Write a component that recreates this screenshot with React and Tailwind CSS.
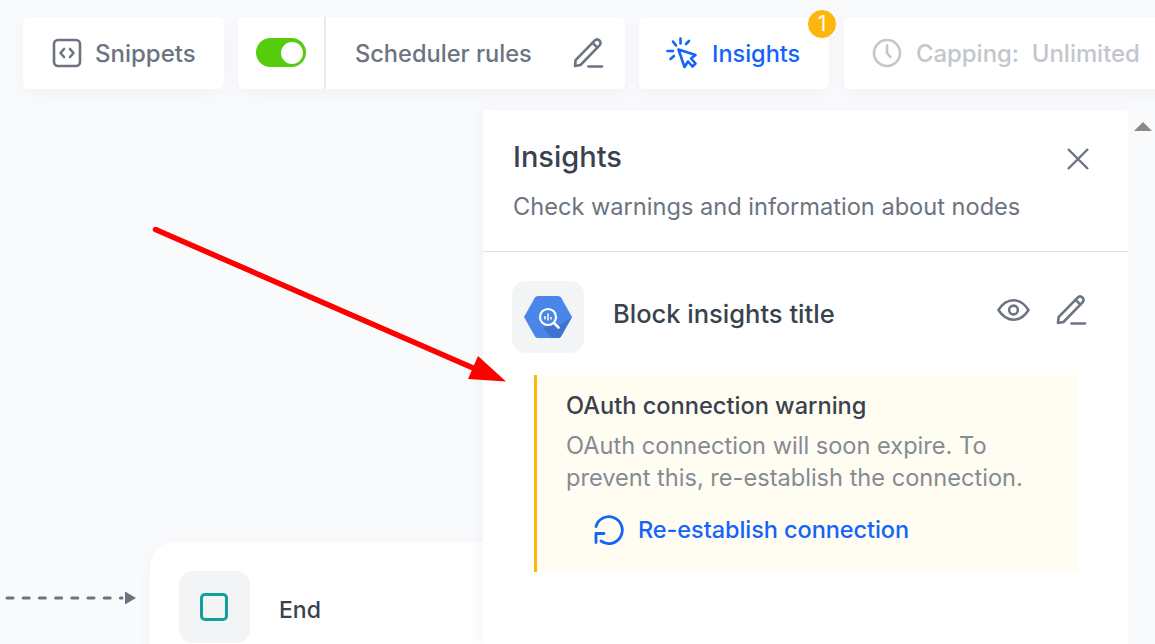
import React from "react";

const font = { fontFamily: "Inter, 'Noto Sans', sans-serif" };

const PencilIcon = ({ className }) => (
  <svg viewBox="0 0 32 32" fill="none" stroke="currentColor" strokeWidth="2.6" strokeLinejoin="round" strokeLinecap="round" className={className}>
    <path d="M3 29 L3.6 23.2 L22.6 3.6 C24 2.2 26 2.2 27.4 3.5 C28.9 4.9 28.9 7 27.5 8.4 L8.5 28 Z" />
    <path d="M20.6 5.8 L25.4 10.6" />
    <path d="M16.5 29.5 H30" />
  </svg>
);

const CursorIcon = () => (
  <svg viewBox="0 0 32 32" fill="none" stroke="currentColor" strokeWidth="2.6" strokeLinecap="round" strokeLinejoin="round" className="w-[32px] h-[32px]">
    <path d="M12.5 12.5 L29.5 18 L25 21.5 L29.5 26.5 L26.5 29.5 L22 24.5 L18.5 30 Z" />
    <path d="M14.5 1.5 V6.5" />
    <path d="M7 4.5 L10 8.5" />
    <path d="M23 4 L20 7" />
    <path d="M1.5 14 H7" />
    <path d="M4.5 22 L8 19" />
  </svg>
);

const BigQueryLogo = () => (
  <svg viewBox="0 0 50 44" className="w-[50px] h-[44px]">
    <path d="M1 22 L12 2.5 Q13 1 15 1 H35 Q37 1 38 2.5 L49 22 L38 41.5 Q37 43 35 43 H15 Q13 43 12 41.5 Z" fill="#4a86e8" />
    <path d="M32 28 L37 30 L49 22 L38 41.5 Q37 43 35 43 H29 L20 33 Z" fill="#3f73cf" />
    <circle cx="25" cy="22" r="8" fill="none" stroke="#fff" strokeWidth="2.2" />
    <path d="M31 28 L35.5 32.5" stroke="#fff" strokeWidth="2.6" strokeLinecap="round" />
    <path d="M22 21 V24.5 M25 18.5 V25.5 M28 22 V24.5" stroke="#fff" strokeWidth="1.5" />
  </svg>
);

const Card = ({ className, children }) => (
  <div className={`h-[72px] bg-white rounded-md flex items-center shrink-0 shadow-[0_4px_14px_rgba(80,90,110,0.05)] ${className}`}>
    {children}
  </div>
);

export default function App() {
  return (
    <div className="relative w-[1155px] h-[644px] overflow-hidden bg-[#f9fafc]" style={font}>
      {/* Top toolbar */}
      <div className="flex pt-[17px] pl-[23px] h-[110px]">
        <Card className="w-[201px] pl-[29px] gap-[13px] text-[#6b7480]">
          <svg viewBox="0 0 30 30" fill="none" stroke="currentColor" strokeWidth="2.6" strokeLinecap="round" strokeLinejoin="round" className="w-[30px] h-[30px]">
            <rect x="2" y="2" width="26" height="26" rx="4" />
            <path d="M12 11 L8.5 15 L12 19" />
            <path d="M18 11 L21.5 15 L18 19" />
          </svg>
          <span className="mt-[2px] text-[24px] font-medium">Snippets</span>
        </Card>

        <Card className="w-[387px] ml-[14px] text-[#6b7480]">
          <div className="w-[88px] h-full flex items-center justify-center border-r-2 border-[#e8eaec]">
            <div className="w-[50px] h-[29px] -mt-[1px] rounded-full bg-[#55cc0c] flex items-center justify-end pr-[2px]">
              <div className="w-[22px] h-[22px] rounded-full bg-white mr-[1px]" />
            </div>
          </div>
          <span className="mt-[2px] ml-[29px] w-[176px] whitespace-nowrap text-[23.6px] font-medium">Scheduler rules</span>
          <PencilIcon className="w-[32px] h-[32px] ml-[41px]" />
        </Card>

        <Card className="relative w-[190px] ml-[14px] pl-[27px] gap-[14px] text-[#1464fa]">
          <CursorIcon />
          <span className="mt-[2px] text-[23.5px] font-medium">Insights</span>
          <div className="absolute -top-[8px] -right-[8px] w-[30px] h-[30px] rounded-full bg-[#fdb60d] border border-white text-white text-[21px] flex items-center justify-center">
            1
          </div>
        </Card>

        <Card className="w-[340px] ml-[15px] pl-[28px] gap-[14px] text-[#c3c6cc]">
          <svg viewBox="0 0 30 30" fill="none" stroke="currentColor" strokeWidth="2.6" strokeLinecap="round" strokeLinejoin="round" className="w-[30px] h-[30px]">
            <circle cx="15" cy="15" r="13" />
            <path d="M15 7.5 V15 L18.5 19" />
          </svg>
          <span className="mt-[2px] text-[23.9px] font-medium whitespace-pre">Capping:  Unlimited</span>
        </Card>
      </div>

      {/* Canvas node */}
      <div className="absolute left-[150px] top-[542px] w-[360px] h-[140px] bg-white rounded-[24px] shadow-[0_4px_14px_rgba(80,90,110,0.05)] pl-[29px] pt-[29px] flex gap-[29px]">
        <div className="w-[71px] h-[72px] rounded-[14px] bg-[#f3f4f6] flex items-center justify-center">
          <div className="w-[28px] h-[28px] mr-[1px] rounded-[5px] border-[3px] border-[#12a19a]" />
        </div>
        <span className="text-[23px] font-medium text-[#39424e] mt-[22px] leading-[34px]">End</span>
      </div>

      <svg viewBox="0 0 140 20" className="absolute left-0 top-[588px] w-[140px] h-[20px]">
        <path d="M7 10 H122" stroke="#6b7480" strokeWidth="3" strokeLinecap="round" strokeDasharray="6 10.2" />
        <path d="M125 3.5 L136 10 L125 16.5 Z" fill="#6b7480" />
      </svg>

      {/* Insights panel */}
      <div className="absolute left-[483px] top-[110px] w-[645px] h-[534px] bg-white shadow-[-4px_0_12px_rgba(80,90,110,0.05)]">
        <div className="h-[142px] border-b border-[#dde2e6] pl-[30px] pr-[38px] pt-[30px] relative">
          <h2 className="text-[29px] leading-[34px] font-medium text-[#39424e]">Insights</h2>
          <p className="mt-[17px] text-[23.6px] leading-[32px] text-[#6b7480]">Check warnings and information about nodes</p>
          <svg viewBox="0 0 24 24" fill="none" stroke="#6b7480" strokeWidth="2.4" className="absolute right-[38px] top-[37px] w-[24px] h-[24px]">
            <path d="M2 2 L22 22 M22 2 L2 22" />
          </svg>
        </div>

        <div className="flex items-center pl-[29px] pr-[41px] pt-[29px]">
          <div className="w-[72px] h-[72px] rounded-[14px] bg-[#f3f4f6] flex items-center justify-center">
            <BigQueryLogo />
          </div>
          <span className="ml-[29px] -mt-[6px] text-[25.5px] font-medium text-[#39424e]">Block insights title</span>
          <div className="ml-auto flex items-center gap-[25px] text-[#6b7480] -mt-[14px]">
            <svg viewBox="0 0 34 24" fill="none" stroke="currentColor" strokeWidth="2.6" strokeLinejoin="round" className="w-[33px] h-[24px]">
              <path d="M1.5 12 C6 5 11 2 17 2 C23 2 28 5 32.5 12 C28 19 23 22 17 22 C11 22 6 19 1.5 12 Z" />
              <circle cx="17" cy="12" r="4.5" />
            </svg>
            <PencilIcon className="w-[32px] h-[32px]" />
          </div>
        </div>

        <div className="ml-[51px] mt-[22px] w-[544px] h-[197px] bg-[#fffdf1] border-l-[3px] border-[#fdb60d] pl-[29px] pt-[15px]">
          <h3 className="text-[23.6px] leading-[32px] font-medium text-[#39424e]">OAuth connection warning</h3>
          <p className="mt-[8px] text-[23.6px] leading-[32px] text-[#858b94]">
            OAuth connection will soon expire. To
            <br />
            prevent this, re-establish the connection.
          </p>
          <div className="flex items-center gap-[14px] ml-[28px] mt-[18px] text-[#1464fa]">
            <svg viewBox="0 0 30 30" fill="none" stroke="currentColor" strokeWidth="2.8" strokeLinecap="round" strokeLinejoin="round" className="w-[30px] h-[30px]">
              <path d="M2 11.5 A13.4 13.4 0 1 1 7 26" />
              <path d="M2 27.5 V18.5 H10" />
            </svg>
            <span className="text-[23.5px] font-medium tracking-[-0.07px]">Re-establish connection</span>
          </div>
        </div>
      </div>

      {/* Scrollbar */}
      <div className="absolute left-[1128px] top-[110px] w-[27px] h-[534px] bg-[#f9fafc]">
        <div className="ml-[6px] mt-[12px] w-0 h-0 border-x-[9px] border-x-transparent border-b-[9px] border-b-[#8a8a8a]" />
      </div>

      {/* Red annotation arrow */}
      <svg viewBox="0 0 1155 644" className="absolute inset-0 w-[1155px] h-[644px] pointer-events-none">
        <path d="M155.5 229.5 L480 371" stroke="#ff0000" strokeWidth="5.5" strokeLinecap="round" />
        <path d="M478 356 L506 381.5 L468 379 Z" fill="#ff0000" />
      </svg>
    </div>
  );
}
